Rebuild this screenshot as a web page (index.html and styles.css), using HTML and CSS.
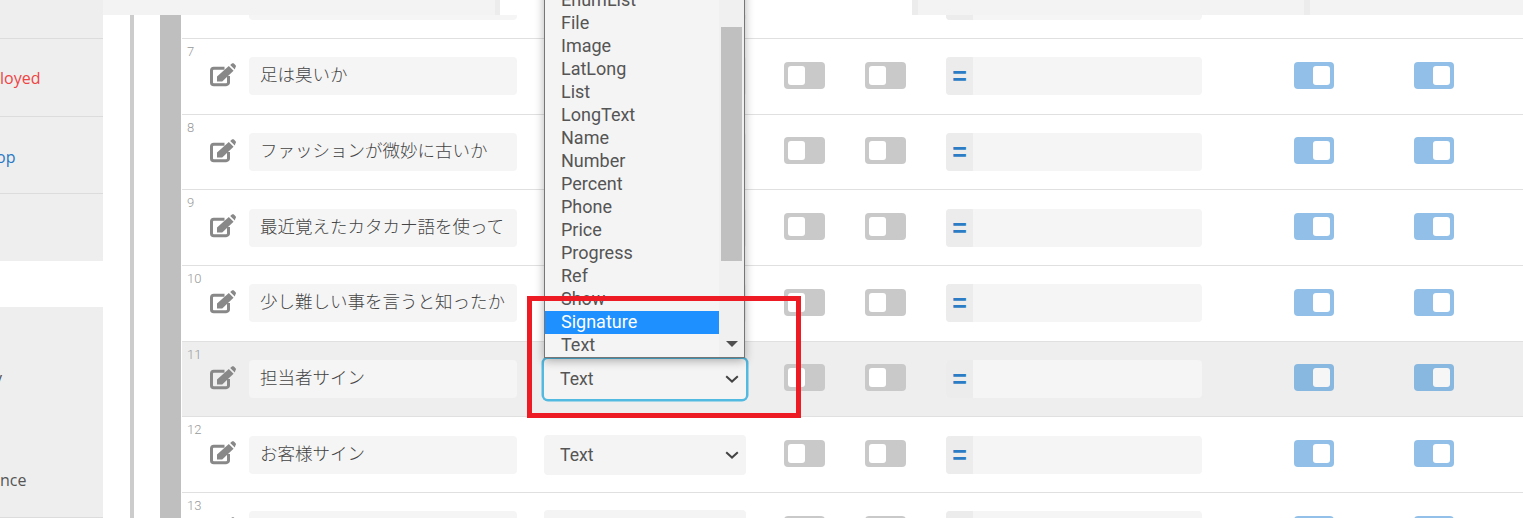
FILE: index.html
```html
<!DOCTYPE html>
<html lang="ja">
<head>
<meta charset="utf-8">
<title>Columns</title>
<link rel="stylesheet" href="styles.css">
</head>
<body>
<svg class="defs" width="0" height="0" aria-hidden="true">
  <symbol id="edit" viewBox="0 0 26 24">
    <path class="edit-box" d="M14.5 5.2H3.8A2.3 2.3 0 0 0 1.5 7.5V19.4A2.3 2.3 0 0 0 3.8 21.7H16.2A2.3 2.3 0 0 0 18.5 19.4V13"/>
    <path class="edit-pen" d="M7 18.5V13.4L18.8 3 23.6 7.8 12.2 18.5Z"/>
    <path class="edit-pen" d="M20.2 1.9 21.9.5C22.6 0 23.3 0 23.9.5L25.6 2.3C26.1 2.9 26.1 3.6 25.6 4.1L24.8 6.4Z"/>
  </symbol>
  <symbol id="chev" viewBox="0 0 14 8">
    <path class="chev-line" d="M1.2 1.2 7 6.6 12.8 1.2"/>
  </symbol>
</svg>
<div class="page">
  <aside class="sidebar">
    <div class="side-block">
      <div class="side-item side-first"></div>
      <div class="side-item side-red">loyed</div>
      <div class="side-item side-blue"><span class="side-shift">op</span></div>
      <div class="side-item side-last"></div>
    </div>
    <div class="side-block side-lower">
      <div class="side-sliver">y</div>
      <div class="side-text">nce</div>
    </div>
  </aside>

  <main class="main">
    <div class="strip">
      <span class="seg seg-a"></span><span class="seg seg-b"></span><span class="seg seg-gap"></span><span class="seg seg-c"></span><span class="seg seg-d"></span><span class="seg seg-c"></span><span class="seg seg-e"></span>
    </div>
    <div class="nest-outer">
      <div class="nest-inner">
        <div class="rows">

          <div class="row">
            <div class="cell-num"><span class="num"></span><svg class="edit"><use href="#edit"/></svg></div>
            <div class="name"><span class="name-text"></span></div>
            <div class="select"><span></span><svg class="chev"><use href="#chev"/></svg></div>
            <div class="toggle"><i class="knob"></i></div>
            <div class="toggle"><i class="knob"></i></div>
            <div class="formula"><span class="eq"></span></div>
            <div class="toggle on"><i class="knob"></i></div>
            <div class="toggle on"><i class="knob"></i></div>
          </div>

          <div class="row">
            <div class="cell-num"><span class="num">7</span><svg class="edit"><use href="#edit"/></svg></div>
            <div class="name"><span class="name-text">足は臭いか</span></div>
            <div class="select"><span></span><svg class="chev"><use href="#chev"/></svg></div>
            <div class="toggle"><i class="knob"></i></div>
            <div class="toggle"><i class="knob"></i></div>
            <div class="formula"><span class="eq">=</span></div>
            <div class="toggle on"><i class="knob"></i></div>
            <div class="toggle on"><i class="knob"></i></div>
          </div>

          <div class="row">
            <div class="cell-num"><span class="num">8</span><svg class="edit"><use href="#edit"/></svg></div>
            <div class="name"><span class="name-text">ファッションが微妙に古いか</span></div>
            <div class="select"><span></span><svg class="chev"><use href="#chev"/></svg></div>
            <div class="toggle"><i class="knob"></i></div>
            <div class="toggle"><i class="knob"></i></div>
            <div class="formula"><span class="eq">=</span></div>
            <div class="toggle on"><i class="knob"></i></div>
            <div class="toggle on"><i class="knob"></i></div>
          </div>

          <div class="row">
            <div class="cell-num"><span class="num">9</span><svg class="edit"><use href="#edit"/></svg></div>
            <div class="name"><span class="name-text">最近覚えたカタカナ語を使って</span></div>
            <div class="select"><span></span><svg class="chev"><use href="#chev"/></svg></div>
            <div class="toggle"><i class="knob"></i></div>
            <div class="toggle"><i class="knob"></i></div>
            <div class="formula"><span class="eq">=</span></div>
            <div class="toggle on"><i class="knob"></i></div>
            <div class="toggle on"><i class="knob"></i></div>
          </div>

          <div class="row">
            <div class="cell-num"><span class="num">10</span><svg class="edit"><use href="#edit"/></svg></div>
            <div class="name"><span class="name-text">少し難しい事を言うと知ったか</span></div>
            <div class="select"><span></span><svg class="chev"><use href="#chev"/></svg></div>
            <div class="toggle"><i class="knob"></i></div>
            <div class="toggle"><i class="knob"></i></div>
            <div class="formula"><span class="eq">=</span></div>
            <div class="toggle on"><i class="knob"></i></div>
            <div class="toggle on"><i class="knob"></i></div>
          </div>

          <div class="row row-active">
            <div class="cell-num"><span class="num">11</span><svg class="edit"><use href="#edit"/></svg></div>
            <div class="name"><span class="name-text">担当者サイン</span></div>
            <div class="select select-focus"><span>Text</span><svg class="chev"><use href="#chev"/></svg></div>
            <div class="toggle"><i class="knob"></i></div>
            <div class="toggle"><i class="knob"></i></div>
            <div class="formula"><span class="eq">=</span></div>
            <div class="toggle on"><i class="knob"></i></div>
            <div class="toggle on"><i class="knob"></i></div>
          </div>

          <div class="row">
            <div class="cell-num"><span class="num">12</span><svg class="edit"><use href="#edit"/></svg></div>
            <div class="name"><span class="name-text">お客様サイン</span></div>
            <div class="select"><span>Text</span><svg class="chev"><use href="#chev"/></svg></div>
            <div class="toggle"><i class="knob"></i></div>
            <div class="toggle"><i class="knob"></i></div>
            <div class="formula"><span class="eq">=</span></div>
            <div class="toggle on"><i class="knob"></i></div>
            <div class="toggle on"><i class="knob"></i></div>
          </div>

          <div class="row">
            <div class="cell-num"><span class="num">13</span><svg class="edit"><use href="#edit"/></svg></div>
            <div class="name"><span class="name-text"></span></div>
            <div class="select"><span></span><svg class="chev"><use href="#chev"/></svg></div>
            <div class="toggle"><i class="knob"></i></div>
            <div class="toggle"><i class="knob"></i></div>
            <div class="formula"><span class="eq"></span></div>
            <div class="toggle on"><i class="knob"></i></div>
            <div class="toggle on"><i class="knob"></i></div>
          </div>

        </div>
      </div>
    </div>
  </main>

  <div class="dropdown">
    <ul class="options">
      <li>EnumList</li>
      <li>File</li>
      <li>Image</li>
      <li>LatLong</li>
      <li>List</li>
      <li>LongText</li>
      <li>Name</li>
      <li>Number</li>
      <li>Percent</li>
      <li>Phone</li>
      <li>Price</li>
      <li>Progress</li>
      <li>Ref</li>
      <li>Show</li>
      <li class="selected">Signature</li>
      <li>Text</li>
    </ul>
    <div class="scrollbar">
      <div class="thumb"></div>
      <div class="arrow"></div>
    </div>
  </div>

  <div class="callout"></div>
</div>
</body>
</html>
```

FILE: styles.css
```css
html, body {
  margin: 0;
  padding: 0;
  height: 100%;
  overflow: hidden;
  background: #fff;
}

.defs {
  position: absolute;
}

.page {
  position: relative;
  display: flex;
  height: 100vh;
  overflow: hidden;
  font-family: Roboto, "Noto Sans CJK JP", sans-serif;
  color: #555;
}

/* sidebar */
.sidebar {
  flex: 0 0 103px;
  display: flex;
  flex-direction: column;
  font-family: "Open Sans", sans-serif;
  font-size: 16px;
}

.side-block {
  background: #eee;
  display: flex;
  flex-direction: column;
  height: 261px;
}

.side-item {
  display: flex;
  align-items: center;
  box-sizing: border-box;
  border-bottom: 1px solid #dcdcdc;
}

.side-first { height: 39px; }
.side-red { height: 78px; color: #ee4444; }
.side-blue { height: 77px; color: #2a78c4; }
.side-last { flex: 1; border-bottom: 0; }

.side-shift {
  margin: 3px 0 0 -4px;
}

.side-lower {
  margin-top: 46px;
  height: 211px;
  box-sizing: border-box;
  padding-top: 59px;
  border-bottom: 1px solid #dcdcdc;
}

.side-sliver {
  line-height: 24px;
  margin-left: -6px;
}

.side-text {
  line-height: 24px;
  margin-top: 78px;
}

/* main area */
.main {
  flex: 1;
  min-width: 0;
  padding-left: 27px;
  display: flex;
}

.nest-outer {
  flex: 1;
  min-width: 0;
  display: flex;
  border-left: 4px solid #ccc;
  padding-left: 26px;
}

.nest-inner {
  flex: 1;
  min-width: 0;
  border-left: 21px solid #bfbfbf;
  padding-left: 1px;
}

.rows {
  margin-top: -37.67px;
}

.row {
  display: grid;
  grid-template-columns: 67px 295px 240px 81px 81px 348px 120px 1fr;
  align-items: center;
  box-sizing: border-box;
  height: 75.67px;
  border-top: 1px solid #e0e0e0;
}

.row-active {
  background: #eee;
}

.cell-num {
  align-self: stretch;
  display: flex;
  flex-direction: column;
  padding: 5px 0 0 5px;
}

.num {
  height: 15px;
  font-size: 13px;
  font-weight: 300;
  line-height: 15px;
  color: #999;
}

.edit {
  width: 26px;
  height: 24px;
  margin: 4px 0 0 23px;
}

.edit-box {
  fill: none;
  stroke: #888;
  stroke-width: 3;
}

.edit-pen {
  fill: #888;
}

.name {
  box-sizing: border-box;
  width: 268px;
  height: 38px;
  padding: 0 11px 5px;
  display: flex;
  align-items: center;
  background: #f5f5f5;
  border-radius: 4px;
  font-family: "Noto Sans CJK JP", sans-serif;
  font-size: 17.5px;
  font-weight: 300;
  color: #444;
}

.name-text {
  flex: 1;
  min-width: 0;
  overflow: hidden;
  white-space: nowrap;
}

.select {
  box-sizing: border-box;
  width: 202px;
  height: 40px;
  padding: 0 7px 0 16px;
  display: flex;
  align-items: center;
  justify-content: space-between;
  background: #f4f4f4;
  border-radius: 4px;
  font-size: 17.6px;
}

.select-focus {
  box-shadow: 0 0 0 2.5px #52b9e0;
}

.chev {
  width: 14px;
  height: 8px;
}

.chev-line {
  fill: none;
  stroke: #444;
  stroke-width: 2;
}

.toggle {
  box-sizing: border-box;
  width: 41px;
  height: 27px;
  margin-bottom: 2px;
  padding: 4px;
  display: flex;
  background: #c9c9c9;
  border-radius: 4px;
}

.toggle.on {
  width: 40px;
  justify-content: flex-end;
  background: #2581d1;
  opacity: 0.5;
}

.knob {
  width: 17px;
  height: 19px;
  background: #fff;
  border-radius: 3px;
}

.formula {
  box-sizing: border-box;
  width: 256px;
  height: 38px;
  display: flex;
  background: #f5f5f5;
  border-radius: 4px;
  overflow: hidden;
}

.eq {
  flex: 0 0 27px;
  background: #ececec;
  text-align: center;
  font-family: "Liberation Sans", sans-serif;
  font-size: 25px;
  font-weight: 700;
  line-height: 38px;
  color: #2b7cc4;
}

/* sticky header strip */
.strip {
  position: absolute;
  top: 0;
  left: 103px;
  right: 0;
  height: 15px;
  display: flex;
  z-index: 2;
}

.seg-a { flex: 0 0 392px; background: #f3f3f3; }
.seg-b { flex: 0 0 5px; background: #ececec; }
.seg-gap { flex: 0 0 412px; background: #fff; }
.seg-c { flex: 0 0 6px; background: #ececec; }
.seg-d { flex: 0 0 386px; background: #f3f3f3; }
.seg-e { flex: 1; background: #f3f3f3; }

/* open select list */
.dropdown {
  position: absolute;
  top: -12px;
  left: 544px;
  width: 201px;
  height: 370px;
  box-sizing: border-box;
  display: flex;
  border: 1px solid #767676;
  background: #f4f4f4;
  box-shadow: 0 3px 9px rgba(0, 0, 0, 0.3);
  z-index: 3;
}

.options {
  flex: 0 0 174px;
  margin: 0;
  padding: 0;
  list-style: none;
  font-size: 18px;
}

.options li {
  height: 23px;
  line-height: 22px;
  padding-left: 16px;
}

.options .selected {
  background: #1e90ff;
  color: #fff;
}

.scrollbar {
  flex: 1;
  display: flex;
  flex-direction: column;
  align-items: center;
  background: #f0f0f0;
}

.thumb {
  width: 21px;
  height: 234px;
  margin-top: 38px;
  background: #c0c0c0;
}

.arrow {
  width: 0;
  height: 0;
  margin-top: auto;
  margin-bottom: 10px;
  border-left: 6px solid transparent;
  border-right: 6px solid transparent;
  border-top: 6px solid #505050;
}

/* red annotation */
.callout {
  position: absolute;
  top: 296px;
  left: 527px;
  width: 274px;
  height: 122px;
  box-sizing: border-box;
  border: 5px solid #ed1c24;
  z-index: 4;
}
```
